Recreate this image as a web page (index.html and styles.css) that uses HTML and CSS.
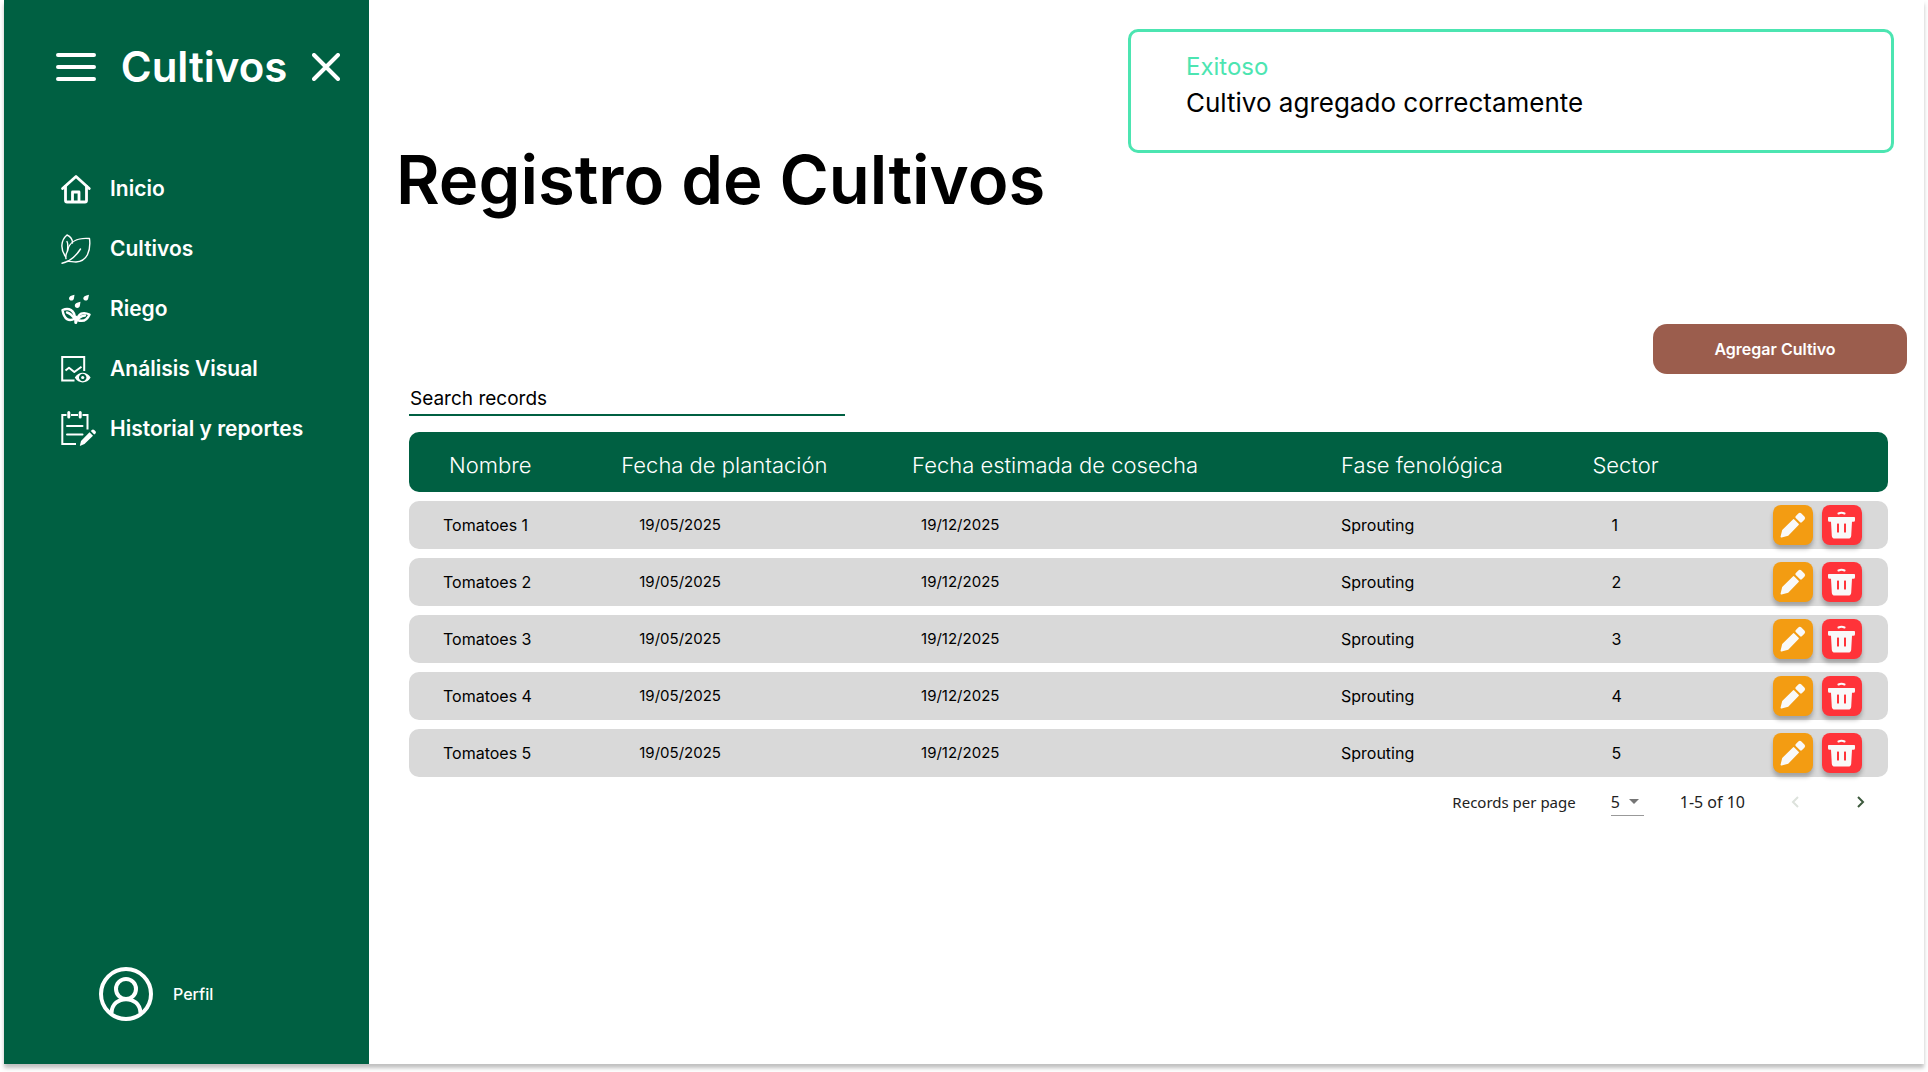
FILE: index.html
```html
<!DOCTYPE html>
<html lang="es">
<head>
<meta charset="utf-8">
<meta name="viewport" content="width=device-width, initial-scale=1">
<title>Registro de Cultivos</title>
<link rel="stylesheet" href="styles.css">
</head>
<body>
<svg class="sprite" aria-hidden="true">
  <symbol id="pencil" viewBox="0 0 26 26">
    <path d="M18.3 1.6 a2.2 2.2 0 0 1 3.1 0 l3 3 a2.2 2.2 0 0 1 0 3.1 l-2.6 2.6 a1.2 1.2 0 0 1 -1.7 0 l-4.400-4.400 a1.200 1.200 0 0 1 0-1.700z"/>
    <path d="M12.900 7.400 a1 1 0 0 1 1.400 0 l4.300 4.300 a1 1 0 0 1 0 1.400 L8.200 23.700 L1.600 25.500 a.800 .800 0 0 1 -1-1 L2.200 18z"/>
  </symbol>
  <symbol id="trash" viewBox="0 0 27 28">
    <path d="M10.500 2.500 Q13.500 1 16.500 2.500" fill="none" stroke="currentColor" stroke-width="2" stroke-linecap="round"/>
    <path fill-rule="evenodd" d="M.8 6 h25.400 a.8 .8 0 0 1 .8.8 v2.400 a1.500 1.500 0 0 1-1.500 1.500 h-1.500 l-.8 14 a3 3 0 0 1-3 2.800 H6.800 a3 3 0 0 1-3-2.800 l-.8-14 h-1.500 A1.500 1.500 0 0 1 0 9.200 V6.800 a.8 .8 0 0 1 .8-.8z M9.500 12.500 h1 a.5 .5 0 0 1 .5.5 v8 a.5 .5 0 0 1-.5.5 h-1 a.5 .5 0 0 1-.5-.5 v-8 a.5 .5 0 0 1 .5-.5z M16.500 12.500 a.5 .5 0 0 0-.5.5 v8 a.5 .5 0 0 0 .5.5 h1 a.5 .5 0 0 0 .5-.5 v-8 a.5 .5 0 0 0-.5-.5z"/>
  </symbol>
</svg>
<div class="app">
  <aside class="sidebar">
    <header class="sidebar-head">
      <button class="icon-button" type="button" aria-label="Menú">
        <svg width="40" height="28" viewBox="0 0 40 28" fill="none" stroke="currentColor" stroke-width="4" stroke-linecap="round"><path d="M2 2H38M2 14H38M2 26H38"/></svg>
      </button>
      <span class="brand">Cultivos</span>
      <button class="icon-button" type="button" aria-label="Cerrar">
        <svg width="28" height="28" viewBox="0 0 28 28" fill="none" stroke="currentColor" stroke-width="4" stroke-linecap="round"><path d="M2 2L26 26M26 2L2 26"/></svg>
      </button>
    </header>
    <nav class="nav">
      <a class="nav-link" href="#inicio">
        <svg width="30" height="30" viewBox="0 0 30 30" fill="none" stroke="currentColor" stroke-width="2.800" stroke-linecap="round" stroke-linejoin="round"><path d="M1.600 14.500 L15 2.500 L28.200 14.500"/><path d="M4.500 12.500 V26.500 Q4.500 28 6 28 H24 Q25.500 28 25.500 26.500 V12.500"/><path d="M11.500 27.500 V18 H18 V27.500"/></svg>
        <span>Inicio</span>
      </a>
      <a class="nav-link" href="#cultivos">
        <svg width="30" height="30" viewBox="0 0 30 30" fill="none" stroke="currentColor" stroke-width="1.400" stroke-linecap="round" stroke-linejoin="round"><path d="M4.500 22.500 C-1 15 0 6 6 1 C9.500 2.500 11.500 5 11.500 9"/><path d="M6 7.500 C7.500 10 6.500 14 6.500 17 C5 20 4.500 22.500 5 24.500"/><path d="M6.500 17 C8 8 16 3.500 28.500 4.500 C30 17 26 27.500 15 28 C11 28 9 27 6 27.500"/><path d="M1 29.200 C9 27.500 15 22 19.500 15"/></svg>
        <span>Cultivos</span>
      </a>
      <a class="nav-link" href="#riego">
        <svg width="30" height="30" viewBox="0 0 30 30" fill="none" stroke="currentColor" stroke-width="2.400" stroke-linecap="round" stroke-linejoin="round"><g fill="currentColor" stroke="none"><path d="M13.500 .8 C9.500 1.500 7.800 2.800 8 4.800 C8.500 7.500 13 7 13 4z"/><path d="M28 .8 C24 1.500 22 2.800 22.300 4.800 C23 7.500 27.300 7 27.300 4z"/><path d="M19.500 7.800 C15.500 8.500 13.500 10 13.800 12 C14.500 15 19 14.500 19 11z"/></g><path d="M1.500 16 C8 13.500 13.500 16 14 24.500 C8 28 3 25.500 1.500 16z"/><path d="M6 18.500 C9 19 11 21 14.800 26"/><path d="M28.500 20.500 C22 17.500 17 19.500 16.500 26 C22 28 26 26.500 28.500 20.500z"/><path d="M24 21.500 C20 22 17 24 15 27.500"/><path d="M14.800 23 V28.500" stroke-width="3"/></svg>
        <span>Riego</span>
      </a>
      <a class="nav-link" href="#analisis">
        <svg width="30" height="28" viewBox="0 0 30 28" fill="none" stroke="currentColor" stroke-width="2"><path d="M13.500 25.500 H1.200 V2 H23.200 V16"/><path d="M4.500 15.500 L8 12.800 L13.300 17 L20.500 11.800" stroke-linejoin="round"/><path fill="currentColor" stroke="none" fill-rule="evenodd" d="M13.800 22.500 C17.500 16 26 16 29.600 22.500 C26 29 17.500 29 13.800 22.500z M21.700 18.800 a3.700 3.700 0 1 0 .01 0z"/><circle cx="21.700" cy="22.500" r="1.600" fill="currentColor" stroke="none"/></svg>
        <span>Análisis Visual</span>
      </a>
      <a class="nav-link" href="#historial">
        <svg width="36" height="36" viewBox="0 0 36 36" fill="none" stroke="currentColor" stroke-width="2"><path d="M15 33 H1.300 V4 H5.500 M10 4 H17 M21.500 4 H26.500 V18.500"/><path d="M7.800 1.500 V6 M19.200 1.500 V6" stroke-width="3" stroke-linecap="round"/><path d="M6 15 H21.500 M6 23.500 H21.500" stroke-linecap="round"/><path fill="currentColor" stroke="none" d="M28.500 21.300 L32 24.800 L23.500 33 L18.800 35 L20 30z M29.800 20 L31.200 18.700 Q32.200 18 33.200 19 L34.700 20.500 Q35.300 21.500 34.500 22.500 L33.200 23.600z"/></svg>
        <span>Historial y reportes</span>
      </a>
    </nav>
    <a class="profile" href="#perfil">
      <svg width="54" height="54" viewBox="0 0 54 54" fill="none" stroke="currentColor" stroke-width="4"><circle cx="27" cy="27" r="25"/><circle cx="27" cy="22" r="10"/><path d="M12.500 46 C13 27.500 41 27.500 41.500 46"/></svg>
      <span>Perfil</span>
    </a>
  </aside>
  <main class="main">
    <div class="toast" role="status">
      <strong class="toast-title">Exitoso</strong>
      <span class="toast-text">Cultivo agregado correctamente</span>
    </div>
    <h1 class="title">Registro de Cultivos</h1>
    <div class="actions"><button class="add" type="button">Agregar Cultivo</button></div>
    <section class="records">
      <input class="search" type="search" placeholder="Search records" aria-label="Search records">
      <table class="table">
        <colgroup><col class="c-name"><col class="c-plant"><col class="c-harvest"><col class="c-phase"><col class="c-sector"><col class="c-tools"></colgroup>
        <thead>
          <tr><th scope="col">Nombre</th><th scope="col">Fecha de plantación</th><th scope="col">Fecha estimada de cosecha</th><th scope="col">Fase fenológica</th><th scope="col">Sector</th><td></td></tr>
        </thead>
        <tbody>
          <tr><td>Tomatoes 1</td><td>19/05/2025</td><td>19/12/2025</td><td>Sprouting</td><td>1</td><td><div class="tools"><button class="tool edit" type="button" aria-label="Editar"><svg width="26" height="26"><use href="#pencil"/></svg></button><button class="tool delete" type="button" aria-label="Eliminar"><svg width="27" height="28"><use href="#trash"/></svg></button></div></td></tr>
          <tr><td>Tomatoes 2</td><td>19/05/2025</td><td>19/12/2025</td><td>Sprouting</td><td>2</td><td><div class="tools"><button class="tool edit" type="button" aria-label="Editar"><svg width="26" height="26"><use href="#pencil"/></svg></button><button class="tool delete" type="button" aria-label="Eliminar"><svg width="27" height="28"><use href="#trash"/></svg></button></div></td></tr>
          <tr><td>Tomatoes 3</td><td>19/05/2025</td><td>19/12/2025</td><td>Sprouting</td><td>3</td><td><div class="tools"><button class="tool edit" type="button" aria-label="Editar"><svg width="26" height="26"><use href="#pencil"/></svg></button><button class="tool delete" type="button" aria-label="Eliminar"><svg width="27" height="28"><use href="#trash"/></svg></button></div></td></tr>
          <tr><td>Tomatoes 4</td><td>19/05/2025</td><td>19/12/2025</td><td>Sprouting</td><td>4</td><td><div class="tools"><button class="tool edit" type="button" aria-label="Editar"><svg width="26" height="26"><use href="#pencil"/></svg></button><button class="tool delete" type="button" aria-label="Eliminar"><svg width="27" height="28"><use href="#trash"/></svg></button></div></td></tr>
          <tr><td>Tomatoes 5</td><td>19/05/2025</td><td>19/12/2025</td><td>Sprouting</td><td>5</td><td><div class="tools"><button class="tool edit" type="button" aria-label="Editar"><svg width="26" height="26"><use href="#pencil"/></svg></button><button class="tool delete" type="button" aria-label="Eliminar"><svg width="27" height="28"><use href="#trash"/></svg></button></div></td></tr>
        </tbody>
      </table>
      <footer class="pager">
        <label for="page-size">Records per page</label>
        <span class="page-size">
          <select id="page-size"><option>5</option><option>10</option></select>
          <svg width="10" height="5" viewBox="0 0 10 5" fill="currentColor" aria-hidden="true"><path d="M0 0H10L5 5z"/></svg>
        </span>
        <span class="range">1-5 of 10</span>
        <button class="page" type="button" aria-label="Previous page" disabled><svg width="8" height="12" viewBox="0 0 8 12" fill="none" stroke="currentColor" stroke-width="2"><path d="M7 1L2 6L7 11"/></svg></button>
        <button class="page" type="button" aria-label="Next page"><svg width="8" height="12" viewBox="0 0 8 12" fill="none" stroke="currentColor" stroke-width="2"><path d="M1 1L6 6L1 11"/></svg></button>
      </footer>
    </section>
  </main>
</div>
</body>
</html>
```
FILE: styles.css
```css
:root {
  --green: #006042;
  --mint: #4ce5b1;
  --row: #d9d9d9;
}

* { box-sizing: border-box; }

body {
  margin: 0;
  background: #fff;
  color: #000;
  font: 16px/24px Inter, "Liberation Sans", sans-serif;
}

button {
  border: 0;
  padding: 0;
  font: inherit;
  color: inherit;
  background: none;
  cursor: pointer;
}

svg { display: block; flex: none; }

.sprite { position: absolute; width: 0; height: 0; }

.app {
  display: grid;
  grid-template-columns: 365px minmax(0, 1fr);
  min-height: calc(100vh - 8px);
  margin: 0 4px 8px;
  background: #fff;
  box-shadow: 0 4px 4px rgba(0, 0, 0, 0.25);
}

/* Sidebar */
.sidebar {
  display: flex;
  flex-direction: column;
  padding: 37px 29px 43px 52px;
  background: var(--green);
  color: #fff;
}

.sidebar-head {
  display: flex;
  align-items: center;
  justify-content: space-between;
  height: 60px;
}

.brand { font-size: 42px; line-height: 60px; font-weight: 600; }

.nav {
  display: flex;
  flex-direction: column;
  margin-top: 62px;
  padding-left: 5px;
}

.nav-link {
  display: grid;
  grid-template-columns: 36px 1fr;
  column-gap: 13px;
  align-items: center;
  height: 60px;
  color: inherit;
  font-size: 21px;
  font-weight: 600;
  text-decoration: none;
}

.profile {
  display: flex;
  align-items: center;
  gap: 20px;
  margin-top: auto;
  padding-left: 43px;
  color: inherit;
  font-weight: 500;
  text-decoration: none;
}

/* Content */
.main { position: relative; padding-top: 132px; }

.toast {
  position: absolute;
  top: 29px;
  right: 30px;
  display: flex;
  flex-direction: column;
  width: 766px;
  height: 124px;
  padding: 17px 55px;
  border: 3px solid var(--mint);
  border-radius: 10px;
  background: #fff;
  font-size: 24px;
  line-height: 36px;
}

.toast-title { color: var(--mint); font-weight: 400; }
.toast-text { font-size: 26px; }

.title {
  margin: 0;
  padding-left: 27px;
  font-size: 67px;
  line-height: 96px;
  font-weight: 600;
}

.actions {
  display: flex;
  justify-content: flex-end;
  margin-top: 96px;
  padding-right: 17px;
}

.add {
  width: 254px;
  height: 50px;
  padding-right: 10px;
  border-radius: 14px;
  background: #9b5d4d;
  color: #fff;
  font-weight: 600;
}

.records { padding: 8px 36px 0 40px; }

.search {
  display: block;
  width: 436px;
  height: 34px;
  padding: 0 1px;
  border: 0;
  border-bottom: 2px solid var(--green);
  border-radius: 0;
  background: none;
  color: #000;
  font: 19px/28px Inter, "Liberation Sans", sans-serif;
  appearance: none;
}

.search::placeholder { color: #000; opacity: 1; }

.table {
  width: 100%;
  margin-top: 7px;
  border-spacing: 0 9px;
  table-layout: fixed;
  text-align: left;
}

.c-name { width: 13%; }
.c-plant { width: 20%; }
.c-harvest { width: 29%; }
.c-phase { width: 17%; }
.c-sector { width: 12%; }
.c-tools { width: 9%; }

.table th {
  padding: 5px 0 0 15px;
  color: #fff;
  font-size: 22px;
  font-weight: 300;
  white-space: nowrap;
}

.table th:nth-child(1) { padding-left: 40px; }
.table th:nth-child(2) { padding-left: 20px; }

.table thead tr { height: 60px; }
.table thead tr > * { background: var(--green); }

.table tbody tr { height: 48px; }
.table tbody td { padding: 0; background: var(--row); }
.table tbody td:nth-child(1) { padding-left: 34px; }
.table tbody td:nth-child(2) { padding-left: 38px; font-size: 15px; }
.table tbody td:nth-child(3) { padding-left: 24px; font-size: 15px; }
.table tbody td:nth-child(4) { padding-left: 15px; }
.table tbody td:nth-child(5) { padding-left: 34px; }
.table tbody td:nth-child(6) { padding-left: 18px; }

.table tr > :first-child { border-radius: 10px 0 0 10px; }
.table tr > :last-child { border-radius: 0 10px 10px 0; }

.tools { display: flex; gap: 9px; }

.tool {
  display: flex;
  align-items: center;
  justify-content: center;
  width: 40px;
  height: 40px;
  border-radius: 8px;
  color: #f9f9f9;
  box-shadow: 0 4px 4px rgba(0, 0, 0, 0.25);
}

.tool svg { fill: currentColor; }
.edit { background: #f39c12; }
.delete { background: #ff3339; }

/* Pagination */
.pager {
  display: flex;
  align-items: center;
  justify-content: flex-end;
  height: 32px;
  padding-right: 19px;
  color: #222;
  font: 16px/24px "Noto Sans", sans-serif;
}

.pager label { font-size: 15px; }

.page-size {
  position: relative;
  width: 33px;
  margin: 0 36px 0 35px;
}

.page-size select {
  display: block;
  width: 100%;
  height: 28px;
  padding: 0;
  border: 0;
  border-bottom: 1px solid #999;
  border-radius: 0;
  background: none;
  color: inherit;
  font: inherit;
  appearance: none;
}

.page-size svg {
  position: absolute;
  top: 11px;
  right: 5px;
  color: #757575;
  pointer-events: none;
}

.page {
  display: flex;
  align-items: center;
  justify-content: center;
  width: 16px;
  height: 24px;
  color: #3d5a3d;
}

.page:disabled { margin: 0 50px 0 42px; color: #dde2dc; }
```
